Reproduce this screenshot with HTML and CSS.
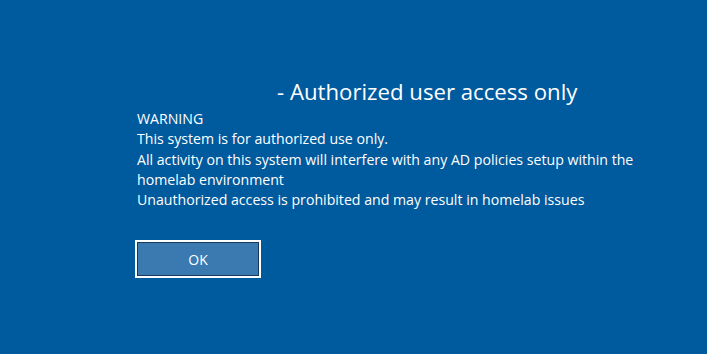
FILE: index.html
```html
<!DOCTYPE html>
<html lang="en">
<head>
    <meta charset="UTF-8">
    <meta name="viewport" content="width=device-width, initial-scale=1.0">
    <title>Legal Notice</title>
    <link rel="stylesheet" href="styles.css">
</head>
<body>

    <div class="notice">
        <h1 class="caption">- Authorized user access only</h1>

        <div class="message">
            <p>WARNING</p>
            <p>This system is for authorized use only.</p>
            <p>All activity on this system will interfere with any AD policies setup within the homelab environment</p>
            <p>Unauthorized access is prohibited and may result in homelab issues</p>
        </div>

        <button class="ok-btn">OK</button>
    </div>

</body>
</html>
```

FILE: styles.css
```css
/* Lock screen legal notice */
* {
    margin: 0;
    padding: 0;
    box-sizing: border-box;
    font-family: 'Open Sans', 'Noto Sans', sans-serif;
}

body {
    background: #005a9e;
    width: 707px;
    height: 354px;
    color: #fff;
    overflow: hidden;
}

.notice {
    padding: 75px 0 0 137px;
    width: 560px;
    display: flex;
    flex-direction: column;
    align-items: flex-start;
}

.caption {
    font-weight: 400;
    font-size: 22.2px;
    line-height: 34px;
    margin-left: 140px;
    white-space: nowrap;
}

.message {
    font-size: 14.15px;
    line-height: 20.3px;
    width: 520px;
}

.ok-btn {
    margin-top: 30px;
    margin-left: -2px;
    width: 126px;
    height: 38px;
    background: #3a7ab1;
    color: #fff;
    border: 2px solid #fff;
    box-shadow: inset 0 0 0 1px #16385c;
    font-size: 14px;
    cursor: pointer;
}
```
